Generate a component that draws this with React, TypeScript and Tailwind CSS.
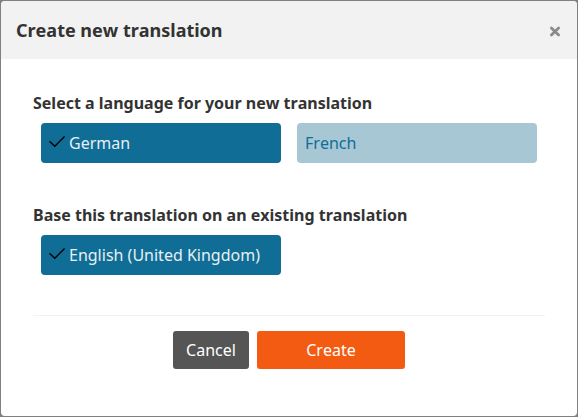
import { useState } from "react";

function CheckMark() {
  return (
    <svg width="16" height="16" viewBox="0 0 16 16" fill="none" stroke="#000" aria-hidden="true">
      <path d="M0.5 7.3L5.8 12.3L15.6 2.4" strokeWidth="1.4" />
    </svg>
  );
}

type OptionGroupProps = {
  legend: string;
  name: string;
  options: string[];
};

function OptionGroup({ legend, name, options }: OptionGroupProps) {
  const [selected, setSelected] = useState(options[0]);

  return (
    <fieldset>
      <legend className="font-bold">{legend}</legend>
      <div className="grid grid-cols-2 gap-4 px-2 pt-2">
        {options.map((option) => {
          const active = option === selected;
          return (
            <label
              key={option}
              className={
                active
                  ? "relative flex h-10 cursor-pointer items-center gap-1 rounded bg-[#106d96] px-2 text-[#e7f0f4]"
                  : "relative flex h-10 cursor-pointer items-center gap-1 rounded bg-[#a7c7d4] px-2 text-[#106d96]"
              }
            >
              <input
                type="radio"
                name={name}
                value={option}
                checked={active}
                onChange={() => setSelected(option)}
                className="sr-only"
              />
              {active && (
                <span className="pb-0.5">
                  <CheckMark />
                </span>
              )}
              {option}
            </label>
          );
        })}
      </div>
    </fieldset>
  );
}

export default function App() {
  return (
    <div className="min-h-screen bg-[#808080] p-px font-['Noto_Sans',sans-serif] text-base text-[#333] [font-kerning:none]">
      <section role="dialog" aria-labelledby="dialog-title" className="overflow-hidden rounded bg-white">
        <header className="flex h-[58px] items-center justify-between bg-[#f2f2f2] px-[15px]">
          <h1 id="dialog-title" className="text-lg font-bold">
            Create new translation
          </h1>
          <button type="button" aria-label="Close" className="cursor-pointer pt-1 text-[#8b8b8b]">
            <svg width="14" height="14" viewBox="0 0 14 14" fill="none" stroke="currentColor" strokeWidth="2.8" strokeLinecap="round" aria-hidden="true">
              <path d="M3.4 2.9L10.6 10.1M10.6 2.9L3.4 10.1" />
            </svg>
          </button>
        </header>
        <form className="px-8 pt-8 pb-[47px]" onSubmit={(event) => event.preventDefault()}>
          <div className="flex flex-col gap-10">
            <OptionGroup
              legend="Select a language for your new translation"
              name="language"
              options={["German", "French"]}
            />
            <OptionGroup
              legend="Base this translation on an existing translation"
              name="base"
              options={["English (United Kingdom)"]}
            />
          </div>
          <div className="mt-10 flex justify-center gap-2 border-t border-[#f2f2f2] pt-[15px]">
            <button type="button" className="h-[38px] w-[76px] cursor-pointer rounded-[3px] bg-[#555] text-white">
              Cancel
            </button>
            <button type="submit" className="h-[38px] w-[148px] cursor-pointer rounded-[3px] bg-[#f35b12] text-white">
              Create
            </button>
          </div>
        </form>
      </section>
    </div>
  );
}
